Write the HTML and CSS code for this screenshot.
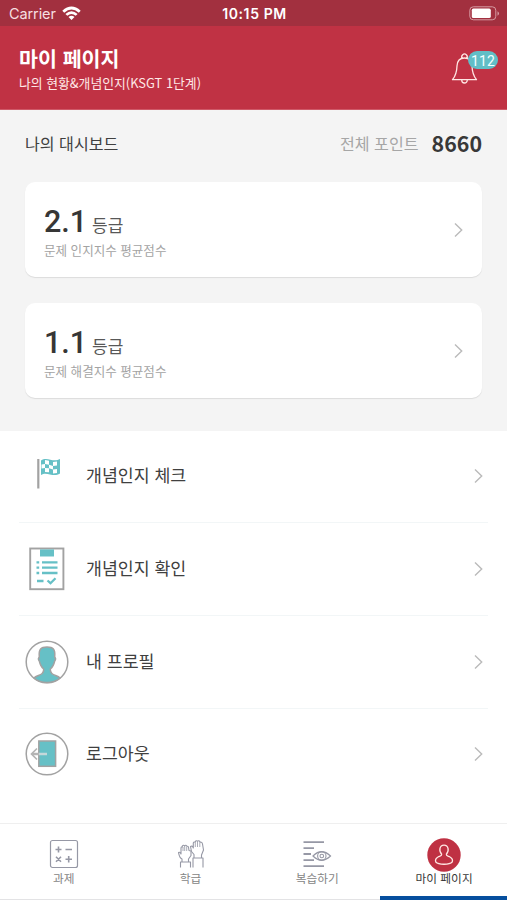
FILE: index.html
```html
<!DOCTYPE html>
<html lang="ko">
<head>
<meta charset="utf-8">
<title>마이 페이지</title>
<link rel="stylesheet" href="styles.css">
</head>
<body>
<div class="status">
  <div class="carrier"><span>Carrier</span>
    <svg width="19" height="15" viewBox="0 0 19 15" fill="#fff"><path d="M.3 4.8Q9.500-3.600 18.700 4.800L16.800 6.700Q9.500.3 2.200 6.700ZM3.400 7.900Q9.500 2.600 15.600 7.900L13.700 9.800Q9.500 6.300 5.300 9.800ZM6.500 11Q9.500 8.500 12.500 11L9.500 14Z"/></svg>
  </div>
  <div class="clock">10:15 PM</div>
  <svg class="battery" width="31" height="15" viewBox="0 0 31 15"><rect x=".8" y=".8" width="26" height="13" rx="3.500" fill="none" stroke="#d69ba3" stroke-width="1"/><rect x="2.800" y="2.600" width="19" height="9.500" rx="1.600" fill="#fff"/><path d="M28.500 5.200q3 2.200 0 4.500z" fill="#d69ba3"/></svg>
</div>
<header class="header">
  <div>
    <h1>마이 페이지</h1>
    <p>나의 현황&amp;개념인지(KSGT 1단계)</p>
  </div>
  <div class="bell">
    <svg width="28" height="34" viewBox="0 0 28 34" fill="none" stroke="#ffe6e3" stroke-width="1.300" stroke-linejoin="round"><path d="M11.300 6.300A2.700 2.700 0 1 1 15.700 6.300M13.500 6C8 6 6.200 9.500 6 14C5.800 21 4.500 24 1.500 27.700H25.500C22.500 24 21.200 21 21 14C20.800 9.500 19 6 13.500 6ZM10.700 28C10.700 32 16.300 32 16.300 28"/></svg>
    <span class="badge">112</span>
  </div>
</header>
<section class="dashboard">
  <div class="summary"><h2>나의 대시보드</h2><span class="points-label">전체 포인트</span><strong>8660</strong></div>
  <div class="card">
    <div><div class="grade"><b>2.1</b><span>등급</span></div><p>문제 인지지수 평균점수</p></div>
    <svg class="chevron" width="9" height="16" viewBox="0 0 9 16"><path d="M1 1.500L7.700 8L1 14.500"/></svg>
  </div>
  <div class="card">
    <div><div class="grade"><b>1.1</b><span>등급</span></div><p>문제 해결지수 평균점수</p></div>
    <svg class="chevron" width="9" height="16" viewBox="0 0 9 16"><path d="M1 1.500L7.700 8L1 14.500"/></svg>
  </div>
</section>
<main class="menu">
  <div class="row">
    <svg class="icon" width="44" height="44" viewBox="0 0 44 44"><path d="M16 6.500C22 2 28 9 35 5V19.500C28 24 22 17 16 21Z" fill="#66c0c6"/><g fill="#fff"><path d="M20 6l4 .7v4l-4-.7zM28 8l4-.5v4l-4 .5zM16.500 10.500l3.500-.5v4l-3.500.6zM24 10.700l4 1.300v3.600l-4-1.300zM20 14l4 .3v4l-4-.3zM28 15.600l4-.5v4l-4 .5z"/></g><path d="M13.300 5V34.500" stroke="#a2a2a2" stroke-width="2.200"/></svg>
    <span>개념인지 체크</span>
    <svg class="chevron" width="9" height="16" viewBox="0 0 9 16"><path d="M1 1.500L7.700 8L1 14.500"/></svg>
  </div>
  <div class="row">
    <svg class="icon" width="44" height="44" viewBox="0 0 44 44"><rect x="5.200" y="1.500" width="33.200" height="40.700" fill="#fff" stroke="#a2a2a2" stroke-width="1.900"/><path d="M15 2.400H29V9.500H15Z" fill="#66c0c6"/><path d="M11.500 15.300h2.700M17 15.300h15.500M11.500 20.700h2.700M17 20.700h15.500M11.500 26h2.700M17 26h15.500M12 34h6.500M22.500 33.500l3 2.700 5-5" fill="none" stroke="#66c0c6" stroke-width="2.300"/></svg>
    <span>개념인지 확인</span>
    <svg class="chevron" width="9" height="16" viewBox="0 0 9 16"><path d="M1 1.500L7.700 8L1 14.500"/></svg>
  </div>
  <div class="row">
    <svg class="icon" width="44" height="44" viewBox="0 0 44 44" stroke="#a2a2a2" stroke-width="1.500"><circle cx="22" cy="22" r="20.800" fill="#fff"/><path d="M9 38C12 34.500 19 36 18.700 29C16 27 15 24 14.300 21C12.500 19 13.600 18 14.300 17C13.500 9 16 7 22 7S30.500 9 29.700 17C30.400 18 31.500 19 29.700 21C29 24 28 27 25.300 29C25 36 32 34.500 35 38A20.800 20.800 0 0 1 9 38Z" fill="#66c0c6"/></svg>
    <span>내 프로필</span>
    <svg class="chevron" width="9" height="16" viewBox="0 0 9 16"><path d="M1 1.500L7.700 8L1 14.500"/></svg>
  </div>
  <div class="row">
    <svg class="icon" width="44" height="44" viewBox="0 0 44 44" stroke="#a2a2a2" stroke-width="1.500" fill="none"><circle cx="22" cy="22" r="20.800" fill="#fff"/><rect x="13.800" y="9" width="16.800" height="25.300" fill="#66c0c6"/><path d="M12 16.500L6.500 22L12 27.500" stroke="#b4b4b4" stroke-width="1.700"/><path d="M7 22H14" stroke="#b4b4b4" stroke-width="2.500"/><path d="M14 22H22" stroke="#c5d8da" stroke-width="2.500"/></svg>
    <span>로그아웃</span>
    <svg class="chevron" width="9" height="16" viewBox="0 0 9 16"><path d="M1 1.500L7.700 8L1 14.500"/></svg>
  </div>
</main>
<nav class="tabs">
  <div class="tab">
    <svg width="34" height="34" viewBox="0 0 34 34" fill="none" stroke="#9698a5" stroke-width="1.200"><rect x="3.500" y="2.500" width="27" height="27" rx="2" /><path d="M8.500 11.500h6M11.500 8.500v6M18.500 11.500h6.500M9 18.700l5 5M14 18.700l-5 5M18.500 21.200h6.500M21.700 18v6.400" stroke-width="1.600"/></svg>
    <span>과제</span>
  </div>
  <div class="tab">
    <svg width="34" height="34" viewBox="0 0 34 34" fill="#fff" stroke="#9698a5" stroke-width="1.100" stroke-linejoin="round"><path d="M6.500 29.500V24H16.500V29.500M8 24V21C5.500 20 5 17 4.500 14.500C5.500 14 6.500 14.500 7 16V10.500Q7 8.500 8.300 9V8Q9.500 6.500 10.600 7.800Q12 6.600 13 8.300Q14.600 8 14.600 10L15 12.500L17 13V17.500L14.500 21V24"/><path d="M19 29.500V20H29V29.500M20 20V16.500L17.500 13.500L16.500 8.500C18 7.500 18.700 8.500 19.300 10V5Q20 3.500 21.200 4.200Q22 2 23.500 3.200Q25 2 26 4.200Q28 3.700 28.500 6L29.500 12L27.500 17V20"/><path d="M9 9v4M10.700 8v5M12.700 8.500V13M21.300 4.500V9M23.500 3.500V9M25.800 4.500V9" stroke-width=".8"/></svg>
    <span>학급</span>
  </div>
  <div class="tab">
    <svg width="34" height="34" viewBox="0 0 34 34" fill="none" stroke="#9698a5" stroke-width="1.800"><path d="M3.500 4.200H24M3.500 10.200H14M3.500 16H11M3.500 22.200H14M3.500 28.200H24"/><path d="M13 18Q21.500 9.500 30.500 18Q21.500 26.500 13 18Z" stroke-width="1.200"/><circle cx="21.800" cy="18" r="4.200" stroke-width="1.100"/><circle cx="21.800" cy="18" r="1.800" stroke-width="1.100"/></svg>
    <span>복습하기</span>
  </div>
  <div class="tab active">
    <svg width="34" height="34" viewBox="0 0 34 34" fill="none"><circle cx="17" cy="17" r="16.700" fill="#bf3143"/><path d="M14.700 16.200C11.500 13 12.500 7.200 17 7.200S22.500 13 19.300 16.200C19 18 21 18 23 19C25.500 20.500 26 22 25.200 24C22.500 27 11.500 27 8.800 24C8 22 8.500 20.500 11 19C13 18 15 18 14.700 16.200Z" stroke="#ffe6e3" stroke-width="1.300"/></svg>
    <span>마이 페이지</span>
  </div>
</nav>
</body>
</html>
```
FILE: styles.css
```css
* { box-sizing: border-box; margin: 0; padding: 0; }
body {
  width: 507px;
  height: 900px;
  overflow: hidden;
  display: flex;
  flex-direction: column;
  background: #fff;
  color: #404040;
  font-family: "Noto Sans CJK KR", sans-serif;
}
svg { display: block; flex: none; }
span, p, h1, h2, b, strong { white-space: nowrap; }
.status {
  height: 26px;
  flex: none;
  display: grid;
  grid-template-columns: 1fr auto 1fr;
  align-items: center;
  padding: 1px 7px 0 9px;
  background: #a2303f;
  color: #fff;
  font: 14.5px/20px Inter, sans-serif;
}
.carrier { display: flex; align-items: center; gap: 6px; color: #f6dfe1; letter-spacing: -.1px; }
.clock { font-weight: 600; font-size: 14px; letter-spacing: .6px; }
.battery { justify-self: end; }
.header {
  height: 84px;
  flex: none;
  display: flex;
  justify-content: space-between;
  padding: 18px 9px 0 19px;
  background: #c03244;
  border-bottom: 1px solid #cf5968;
  color: #fff;
}
.header h1 { font-size: 20.6px; line-height: 29px; font-weight: 700; }
.header p { font-size: 12.85px; line-height: 20px; color: #ffe9e7; }
.bell { position: relative; width: 47px; padding-top: 8px; }
.badge {
  position: absolute;
  left: 17px;
  top: 7px;
  width: 30px;
  height: 18px;
  border-radius: 9px;
  background: #61bec6;
  color: #f4ffff;
  font: 14px/20px Roboto, sans-serif;
  letter-spacing: .2px;
  text-align: center;
}
.dashboard { height: 321px; flex: none; padding: 16px 25px 0; background: #f4f4f4; }
.summary { display: flex; align-items: center; height: 34px; margin-bottom: 22px; }
.summary h2 { font-size: 16.1px; font-weight: 400; margin-right: auto; }
.points-label { font-size: 16.1px; color: #a6a6a6; margin-right: 13px; }
.summary strong { font-weight: 700; font-size: 21.4px; line-height: 34px; color: #383838; }
.card {
  height: 95px;
  margin-bottom: 26px;
  padding: 4px 19px 0 19px;
  display: flex;
  align-items: center;
  justify-content: space-between;
  background: #fff;
  border-radius: 10px;
  box-shadow: 0 1px 1px rgba(0, 0, 0, .1);
}
.card .chevron { margin-top: -3px; }
.grade { display: flex; align-items: baseline; height: 36px; line-height: 36px; }
.grade b {
  width: 48px;
  font: 500 30.5px/36px Roboto, sans-serif;
  color: #363636;
}
.grade span { font-size: 17px; color: #585858; }
.card p { font-size: 12.55px; line-height: 20px; color: #a3a3a3; }
.chevron { fill: none; stroke: #bababa; stroke-width: 1.400px; }
.menu { height: 392px; flex: none; padding: 0 19px; }
.row { height: 93px; display: flex; align-items: center; padding: 0 5px 0 6px; border-bottom: 1px solid #f2f6f7; }
.row:first-child { height: 92px; padding-bottom: 1px; }
.row:last-child { border: 0; padding-bottom: 3px; }
.row span { flex: 1; margin: -3px 0 0 17px; font-size: 17.3px; }
.tabs {
  flex: 1;
  display: grid;
  grid-template-columns: repeat(4, 1fr);
  border-top: 1px solid #efefef;
}
.tab {
  display: flex;
  flex-direction: column;
  align-items: center;
  padding: 14px 0 0 1px;
  border-bottom: 1px solid #e3e3e5;
  font-size: 11.7px;
  line-height: 14px;
  color: #858585;
}
.tab span { margin-top: -1px; }
.tab.active { border-bottom: 4px solid #064f9e; color: #383838; }
```
